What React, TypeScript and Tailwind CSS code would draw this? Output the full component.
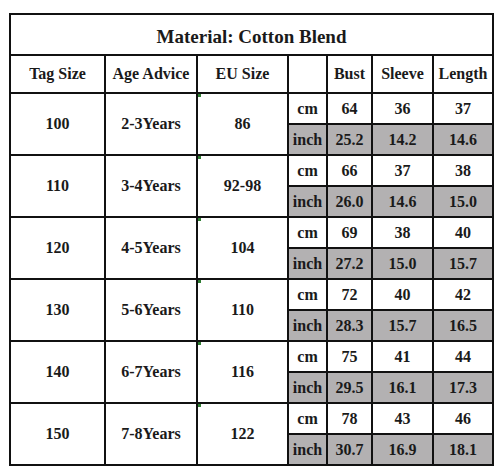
import React from 'react';

const rows = [
  { tag: '100', age: '2-3Years', eu: '86', cm: ['64', '36', '37'], inch: ['25.2', '14.2', '14.6'] },
  { tag: '110', age: '3-4Years', eu: '92-98', cm: ['66', '37', '38'], inch: ['26.0', '14.6', '15.0'] },
  { tag: '120', age: '4-5Years', eu: '104', cm: ['69', '38', '40'], inch: ['27.2', '15.0', '15.7'] },
  { tag: '130', age: '5-6Years', eu: '110', cm: ['72', '40', '42'], inch: ['28.3', '15.7', '16.5'] },
  { tag: '140', age: '6-7Years', eu: '116', cm: ['75', '41', '44'], inch: ['29.5', '16.1', '17.3'] },
  { tag: '150', age: '7-8Years', eu: '122', cm: ['78', '43', '46'], inch: ['30.7', '16.9', '18.1'] },
];

const cell = "border-2 border-[#111] text-center align-middle p-0 font-[family-name:'Liberation_Serif',serif]";

export default function App() {
  return (
    <div className="w-[500px] h-[471px] bg-white pt-[13px] pl-[9px]">
      <table className="border-collapse table-fixed w-[483px] font-bold text-[16px] leading-none text-[#1a1a1a]">
        <colgroup>
          <col className="w-[95px]" />
          <col className="w-[92px]" />
          <col className="w-[91px]" />
          <col className="w-[39px]" />
          <col className="w-[45px]" />
          <col className="w-[61px]" />
          <col className="w-[60px]" />
        </colgroup>
        <tbody>
          <tr className="h-[41px]">
            <td colSpan={7} className={`${cell} text-[19px] pt-[4px]`}>Material: Cotton Blend</td>
          </tr>
          <tr className="h-[38px]">
            <td className={cell}>Tag Size</td>
            <td className={cell}>Age Advice</td>
            <td className={cell}>EU Size</td>
            <td className={cell}></td>
            <td className={cell}>Bust</td>
            <td className={cell}>Sleeve</td>
            <td className={cell}>Length</td>
          </tr>
          {rows.map((r) => (
            <React.Fragment key={r.tag}>
              <tr className="h-[31px]">
                <td rowSpan={2} className={cell}>{r.tag}</td>
                <td rowSpan={2} className={cell}>{r.age}</td>
                <td rowSpan={2} className={`${cell} relative`}>
                  <span className="absolute left-0 top-0 w-[3px] h-[3px] bg-[#2e7d32]" />
                  {r.eu}
                </td>
                <td className={cell}>cm</td>
                {r.cm.map((v, i) => (
                  <td key={i} className={cell}>{v}</td>
                ))}
              </tr>
              <tr className="h-[31px] bg-[#b3b1b2]">
                <td className={cell}>inch</td>
                {r.inch.map((v, i) => (
                  <td key={i} className={cell}>{v}</td>
                ))}
              </tr>
            </React.Fragment>
          ))}
        </tbody>
      </table>
    </div>
  );
}
